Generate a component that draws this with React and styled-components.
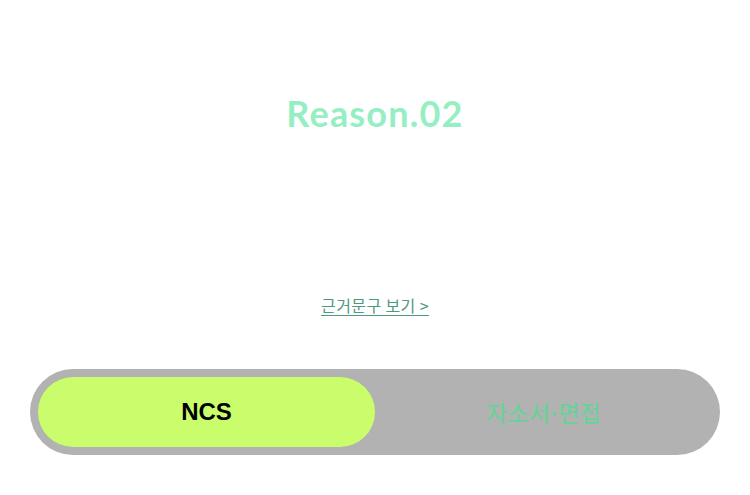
import React, { useState } from 'react'
import styled, { createGlobalStyle } from 'styled-components'

const GlobalStyle = createGlobalStyle`
  html, body {
    margin: 0;
    padding: 0;
    background: #ffffff;
    font-family: "Noto Sans", "Noto Sans CJK KR", sans-serif;
  }
`

const Page = styled.div`
  width: 750px;
  height: 495px;
  display: flex;
  flex-direction: column;
  align-items: center;
  box-sizing: border-box;
  padding-top: 89px;
`

const Title = styled.h2`
  margin: 0;
  font-family: "Lato", "Noto Sans", sans-serif;
  font-weight: 700;
  font-size: 36px;
  line-height: 48px;
  letter-spacing: 1.2px;
  color: #95efc3;
`

const EvidenceLink = styled.a`
  margin-top: 156px;
  font-family: "Noto Sans CJK KR", sans-serif;
  font-size: 16px;
  line-height: 24px;
  color: #4f9a7c;
  text-decoration: underline;
  text-underline-offset: 3px;
  letter-spacing: 0.4px;
  cursor: pointer;
`

const Toggle = styled.div`
  margin-top: 52px;
  width: 690px;
  height: 86px;
  box-sizing: border-box;
  padding: 8px;
  border-radius: 43px;
  background: #b2b2b2;
  display: grid;
  grid-template-columns: 1fr 1fr;
`

const Tab = styled.button`
  border: none;
  border-radius: 35px;
  background: ${p => (p.$active ? '#c9fd6b' : 'transparent')};
  color: ${p => (p.$active ? '#000000' : '#6fcf9a')};
  font-family: ${p => (p.$active ? '"Liberation Sans", sans-serif' : '"Noto Sans CJK KR", sans-serif')};
  font-weight: ${p => (p.$active ? 700 : 500)};
  font-size: ${p => (p.$active ? '24px' : '23px')};
  letter-spacing: 0;
  cursor: pointer;
  padding: 0;
`

const Dot = styled.span`
  font-family: "Noto Sans", sans-serif;
  font-weight: 700;
  margin: 0 1px;
`

export default function App() {
  const [tab, setTab] = useState(0)
  return (
    <>
      <GlobalStyle />
      <Page>
        <Title>Reason.02</Title>
        <EvidenceLink>근거문구 보기 &gt;</EvidenceLink>
        <Toggle>
          <Tab $active={tab === 0} onClick={() => setTab(0)}>NCS</Tab>
          <Tab $active={tab === 1} onClick={() => setTab(1)}>
            자소서<Dot>·</Dot>면접
          </Tab>
        </Toggle>
      </Page>
    </>
  )
}
